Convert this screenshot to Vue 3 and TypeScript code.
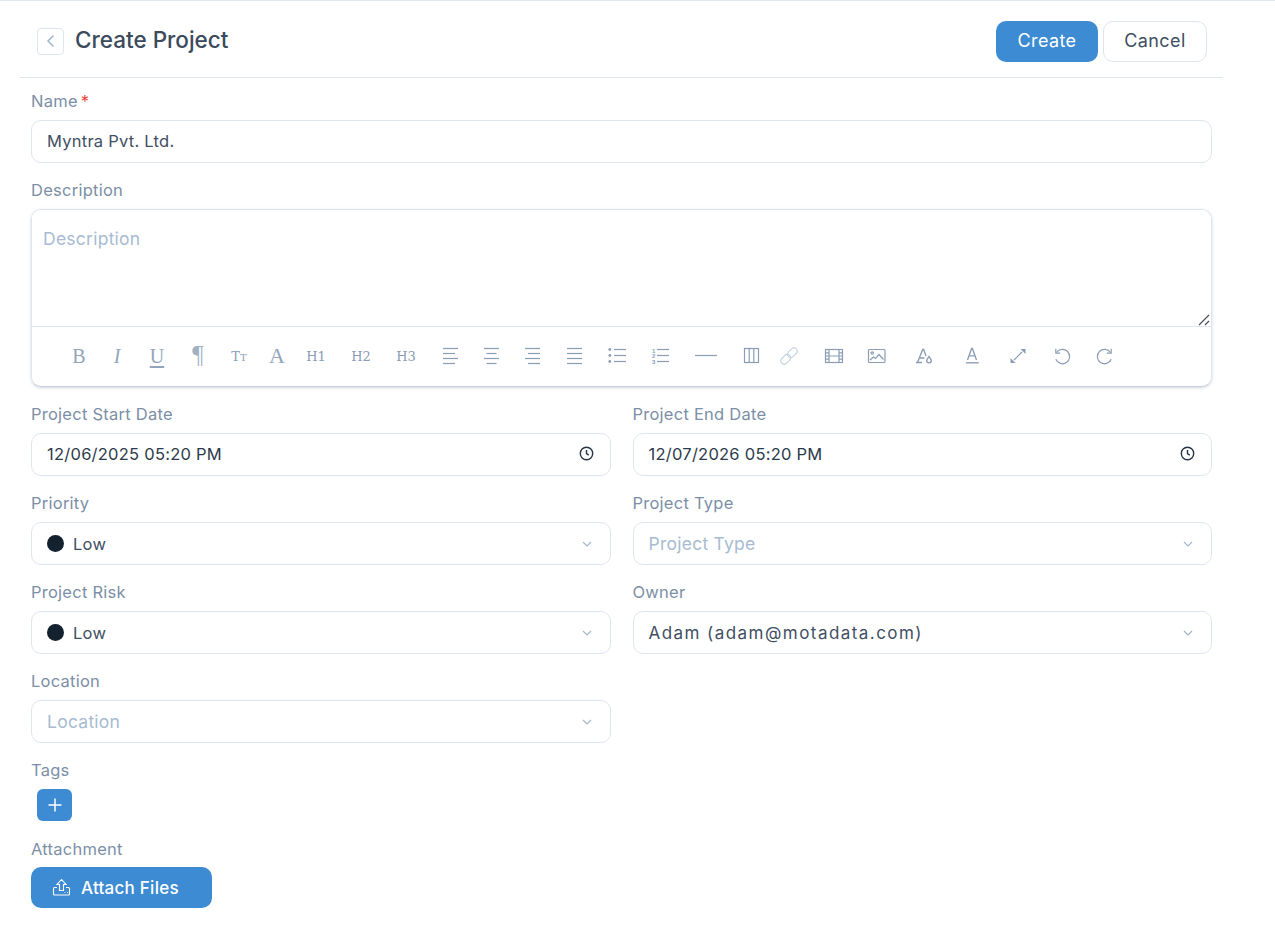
<script setup lang="ts">
interface Tool {
  c: number
  text?: string
  small?: string
  cls?: string
  svg?: string
  faded?: boolean
}

const lines = (rows: number[][]) =>
  rows.map(([a, y, b]) => `<path d="M${a} ${y}H${b}"/>`).join('')

const raw: Tool[] = [
  { c: 79, text: 'B', cls: 'big' },
  { c: 117, text: 'I', cls: 'big ital' },
  { c: 157, text: 'U', cls: 'big uline' },
  { c: 198, text: '¶', cls: 'para' },
  { c: 239, text: 'T', small: 'T', cls: 'tiny' },
  { c: 277, text: 'A', cls: 'large' },
  { c: 316, text: 'H1', cls: 'head' },
  { c: 361, text: 'H2', cls: 'head' },
  { c: 406, text: 'H3', cls: 'head' },
  { c: 450, svg: lines([[2, 1.5, 17], [2, 6.5, 14], [2, 11.5, 17], [2, 16.5, 14]]) },
  { c: 491, svg: lines([[2, 1.5, 17], [4.5, 6.5, 14.5], [2, 11.5, 17], [4.5, 16.5, 14.5]]) },
  { c: 533, svg: lines([[1, 1.5, 16], [4, 6.5, 16], [1, 11.5, 16], [4, 16.5, 16]]) },
  { c: 574, svg: lines([[2, 1.5, 17], [2, 6.5, 17], [2, 11.5, 17], [2, 16.5, 17]]) },
  {
    c: 617,
    svg:
      '<circle cx="1.8" cy="2.5" r="1.4" class="solid"/><circle cx="1.8" cy="8.5" r="1.4" class="solid"/><circle cx="1.8" cy="14.5" r="1.4" class="solid"/>' +
      lines([[6, 2.5, 18], [6, 8.5, 18], [6, 14.5, 18]]),
  },
  {
    c: 660,
    svg:
      '<text x="1" y="5.5">1</text><text x="1" y="11">2</text><text x="1" y="16.5">3</text>' +
      lines([[6, 2.5, 18], [6, 8.5, 18], [6, 14.5, 18]]),
  },
  { c: 706, svg: '<path d="M-2 8.5H20"/>' },
  {
    c: 751,
    svg: '<rect x="2.5" y="1.5" width="14" height="14" stroke-width="1.7"/><path d="M7.2 1.5v14M11.8 1.5v14" stroke-width="1.5"/>',
  },
  {
    c: 789,
    faded: true,
    svg: '<rect x="0.2" y="9" width="11" height="6.6" rx="3.3" transform="rotate(-45 5.7 12.3)"/><rect x="6.8" y="2.4" width="11" height="6.6" rx="3.3" transform="rotate(-45 12.3 5.7)"/>',
  },
  {
    c: 834,
    svg: '<rect x="0.5" y="2.5" width="17" height="13" /><path d="M4 2.5v13M14 2.5v13M4 9h10M.5 5.8h3.5M.5 9h3.5M.5 12.2h3.5M14 5.8h3.5M14 9h3.5M14 12.2h3.5"/>',
  },
  {
    c: 877,
    svg: '<rect x="0.5" y="2.5" width="16.5" height="13" rx="1"/><circle cx="4.2" cy="6" r="1.2"/><path d="M2 13l3.5-3 2 1.5 3.5-4 4.5 5"/>',
  },
  {
    c: 923,
    cls: 'strong',
    svg: '<path d="M2 15.5h6M3.5 15.5 8.7 2.5h1L12 9M5.5 11h5"/><path d="M15 9.5c-1.5 1.9-2.3 2.9-2.3 4a2.3 2.3 0 0 0 4.6 0c0-1.1-.8-2.1-2.3-4z"/>',
  },
  {
    c: 972,
    cls: 'strong',
    svg: '<path d="M4.5 13 8.6 1.5h.8L13.5 13M6 8.8h6"/><path d="M3 15.8h12.8" stroke-width="1.8"/>',
  },
  {
    c: 1018,
    svg: '<path d="M5 13 13 5" stroke-width="1.4"/><path class="solid" d="M11.5 2H16.5V7zM6.5 16H1.5V11z"/>',
  },
  {
    c: 1062,
    svg: '<path d="M3.5 5.5a7.2 7.2 0 1 1-.7 6.8"/><path d="M2.8 1.8v4.4h4.4"/>',
  },
  {
    c: 1105,
    svg: '<path d="M14.5 5.5a7.2 7.2 0 1 0 .7 6.8"/><path d="M15.2 1.8v4.4h-4.4"/>',
  },
]

// Fixed-width buttons; the margin between them carries the toolbar's uneven rhythm.
const TOOL_WIDTH = 36
const tools = raw.map((t, i) => ({
  ...t,
  gap: i === 0 ? 0 : t.c - raw[i - 1].c - TOOL_WIDTH,
}))
</script>

<template>
  <div class="page">
    <header class="head-bar">
      <div class="title-wrap">
        <button class="back" type="button" aria-label="Back">
          <svg width="12" height="14" viewBox="0 0 12 14"><path d="M8.5 1.5 3 7l5.5 5.5" /></svg>
        </button>
        <h1>Create Project</h1>
      </div>
      <div class="actions">
        <button class="btn primary" type="button">Create</button>
        <button class="btn ghost" type="button">Cancel</button>
      </div>
    </header>

    <form class="form" @submit.prevent>
      <div class="field wide">
        <label>Name<span class="req">*</span></label>
        <input class="control raised" type="text" value="Myntra Pvt. Ltd." />
      </div>

      <div class="field wide">
        <label>Description</label>
        <div class="editor">
          <div class="text-wrap">
            <textarea placeholder="Description"></textarea>
            <svg class="grip" width="12" height="12" viewBox="0 0 12 12">
              <path d="M1 11 11 1M7 11l4-4" />
            </svg>
          </div>
          <div class="toolbar">
            <span
              v-for="t in tools"
              :key="t.c"
              class="tool"
              :class="[t.cls, { faded: t.faded }]"
              :style="{ width: TOOL_WIDTH + 'px', marginLeft: t.gap + 'px' }"
            >
              <template v-if="t.text">{{ t.text }}<small v-if="t.small">{{ t.small }}</small></template>
              <svg v-else width="18" height="18" viewBox="0 0 18 18" v-html="t.svg"></svg>
            </span>
          </div>
        </div>
      </div>

      <div class="field">
        <label>Project Start Date</label>
        <div class="control box raised">
          <span class="dark">12/06/2025 05:20 PM</span>
          <svg class="clock" width="15" height="15" viewBox="0 0 15 15"><circle cx="7.5" cy="7.5" r="6.2" /><path d="M7.5 4v3.7l2.3 1.4" /></svg>
        </div>
      </div>
      <div class="field">
        <label>Project End Date</label>
        <div class="control box raised">
          <span class="dark">12/07/2026 05:20 PM</span>
          <svg class="clock" width="15" height="15" viewBox="0 0 15 15"><circle cx="7.5" cy="7.5" r="6.2" /><path d="M7.5 4v3.7l2.3 1.4" /></svg>
        </div>
      </div>

      <div class="field">
        <label>Priority</label>
        <div class="control box">
          <span class="val"><i class="dot"></i>Low</span>
          <svg class="chev" width="10" height="6" viewBox="0 0 10 6"><path d="M1 1l4 4 4-4" /></svg>
        </div>
      </div>
      <div class="field">
        <label>Project Type</label>
        <div class="control box">
          <span class="ph">Project Type</span>
          <svg class="chev" width="10" height="6" viewBox="0 0 10 6"><path d="M1 1l4 4 4-4" /></svg>
        </div>
      </div>

      <div class="field">
        <label>Project Risk</label>
        <div class="control box">
          <span class="val"><i class="dot"></i>Low</span>
          <svg class="chev" width="10" height="6" viewBox="0 0 10 6"><path d="M1 1l4 4 4-4" /></svg>
        </div>
      </div>
      <div class="field">
        <label>Owner</label>
        <div class="control box">
          <span class="val owner">Adam (adam@motadata.com)</span>
          <svg class="chev" width="10" height="6" viewBox="0 0 10 6"><path d="M1 1l4 4 4-4" /></svg>
        </div>
      </div>

      <div class="field">
        <label>Location</label>
        <div class="control box">
          <span class="ph">Location</span>
          <svg class="chev" width="10" height="6" viewBox="0 0 10 6"><path d="M1 1l4 4 4-4" /></svg>
        </div>
      </div>

      <div class="field wide tags">
        <label>Tags</label>
        <button class="add" type="button" aria-label="Add tag">
          <svg width="16" height="16" viewBox="0 0 16 16"><path d="M8 1.5v13M1.5 8h13" /></svg>
        </button>
      </div>

      <div class="field wide">
        <label class="low-label">Attachment</label>
        <button class="attach" type="button">
          <svg width="19" height="19" viewBox="0 0 19 19">
            <path d="M9.5 1.5 5 6.5h2.5v6h4v-6H14z" />
            <path d="M5 9.5H2.5a1 1 0 0 0-1 1v5.5a1 1 0 0 0 1 1h14a1 1 0 0 0 1-1v-5.5a1 1 0 0 0-1-1H14" />
            <path d="M12.5 14.5h.8M15 14.5h.8" />
          </svg>
          Attach Files
        </button>
      </div>
    </form>
  </div>
</template>

<style scoped>
.page {
  width: 1275px;
  height: 951px;
  box-sizing: border-box;
  border-top: 1px solid #e2e8f0;
  background: #fff;
  font-family: Inter, "Liberation Sans", sans-serif;
  font-size: 16.5px;
  letter-spacing: 0.25px;
  color: #3f4f63;
  overflow: hidden;
}
.head-bar {
  width: 1203px;
  height: 77px;
  box-sizing: border-box;
  margin-left: 20px;
  padding: 20px 16px 15px 17px;
  border-bottom: 1px solid #dfe5ee;
  display: flex;
  justify-content: space-between;
  align-items: flex-start;
}
.title-wrap {
  display: flex;
  align-items: center;
  gap: 11px;
  height: 41px;
}
.back {
  width: 27px;
  height: 27px;
  margin-top: -1px;
  padding: 0;
  border: 1px solid #dfe5ee;
  border-radius: 4px;
  background: #fff;
  display: flex;
  align-items: center;
  justify-content: center;
}
.back path {
  fill: none;
  stroke: #9fb4cc;
  stroke-width: 1.5;
}
h1 {
  margin: 0 0 3px;
  font-size: 22.5px;
  line-height: 30px;
  font-weight: 500;
  letter-spacing: 0;
  color: #3b4a5c;
}
.actions {
  display: flex;
  gap: 5px;
}
.btn {
  height: 41px;
  padding: 0 0 2px;
  border-radius: 10px;
  font: inherit;
  font-size: 18px;
  letter-spacing: 0.4px;
}
.primary {
  width: 102px;
  border: 0;
  background: #3d8bd3;
  color: #fff;
}
.ghost {
  width: 104px;
  border: 1px solid #dfe5ee;
  background: #fff;
  color: #3f4f63;
}
.form {
  margin-left: 31px;
  width: 1181px;
  padding-top: 12px;
  display: grid;
  grid-template-columns: 1fr 1fr;
  column-gap: 22px;
  row-gap: 16px;
}
.field {
  min-width: 0;
}
.wide {
  grid-column: 1 / -1;
}
label {
  display: block;
  height: 22px;
  margin-bottom: 8px;
  line-height: 22px;
  color: #7c8fa6;
}
.low-label {
  position: relative;
  top: 1px;
}
.req {
  margin-left: 3px;
  color: #e5483d;
  line-height: 0;
}
.control {
  display: block;
  width: 100%;
  height: 43px;
  box-sizing: border-box;
  padding: 0 15px;
  border: 1px solid #dfe5ee;
  border-radius: 10px;
  background: #fff;
  font: inherit;
  letter-spacing: inherit;
  color: #3f4f63;
  outline: none;
}
.raised {
  padding-bottom: 2px;
}
.box {
  display: flex;
  align-items: center;
  justify-content: space-between;
}
.dark {
  color: #2c3b4c;
}
.val {
  display: flex;
  align-items: center;
  gap: 9px;
}
.owner {
  font-size: 17px;
  letter-spacing: 1.45px;
}
.ph {
  font-size: 17.5px;
  color: #a7bbd1;
}
.dot {
  width: 17px;
  height: 17px;
  border-radius: 50%;
  background: #14212f;
}
.clock {
  margin-right: 1px;
}
.clock circle,
.clock path {
  fill: none;
  stroke: #263545;
  stroke-width: 1.4;
}
.chev {
  margin-right: 3px;
}
.chev path {
  fill: none;
  stroke: #a4b6ca;
  stroke-width: 1.2;
}
.editor {
  height: 178px;
  box-sizing: border-box;
  border: 1px solid #dfe5ee;
  border-bottom-color: #c5cfdb;
  border-radius: 10px;
  box-shadow: 0 1px 3px rgba(120, 135, 155, 0.35);
  overflow: hidden;
}
.text-wrap {
  position: relative;
}
textarea {
  display: block;
  width: 100%;
  height: 117px;
  box-sizing: border-box;
  padding: 18px 11px;
  border: 0;
  border-bottom: 1px solid #dfe5ee;
  outline: none;
  resize: none;
  font: inherit;
  font-size: 17.5px;
  letter-spacing: inherit;
  line-height: 22px;
  color: #3f4f63;
}
textarea::placeholder {
  color: #a7bbd1;
  opacity: 1;
}
.grip {
  position: absolute;
  right: 1px;
  bottom: 1px;
}
.grip path {
  fill: none;
  stroke: #4a4f55;
  stroke-width: 1.2;
}
.toolbar {
  height: 58px;
  padding-left: 29px;
  padding-bottom: 1px;
  display: flex;
  align-items: center;
}
.tool {
  flex: none;
  height: 24px;
  display: flex;
  align-items: center;
  justify-content: center;
  font-family: "DejaVu Serif", "Liberation Serif", serif;
  letter-spacing: 0;
  color: #8a9db5;
}
.tool :deep(path),
.tool :deep(rect),
.tool :deep(circle) {
  fill: none;
  stroke: #8a9db5;
  stroke-width: 1.2;
}
.tool :deep(.solid) {
  fill: #8a9db5;
  stroke: none;
}
.tool :deep(text) {
  font-family: "Liberation Sans", sans-serif;
  font-size: 6px;
  font-weight: 700;
  fill: #8a9db5;
}
.strong :deep(path) {
  stroke-width: 1.35;
}
.tool svg {
  overflow: visible;
}
.faded :deep(rect) {
  stroke: #c8d4e1;
}
.big {
  font-family: "Liberation Serif", serif;
  font-size: 20px;
  color: #93a5bb;
}
.para {
  font-family: "Liberation Serif", serif;
  font-size: 25px;
  padding-bottom: 3px;
  box-sizing: border-box;
  color: #a0b0c3;
}
.ital {
  font-style: italic;
}
.uline {
  text-decoration: underline;
  text-underline-offset: 3px;
}
.tiny {
  font-size: 13px;
}
.tiny small {
  margin-top: 2px;
  font-size: 10px;
}
.large {
  font-family: "Liberation Serif", serif;
  font-size: 22px;
  color: #93a5bb;
}
.head {
  font-size: 13px;
}
.add {
  display: flex;
  align-items: center;
  justify-content: center;
  width: 35px;
  height: 32px;
  margin-left: 6px;
  padding: 0;
  border: 0;
  border-radius: 6px;
  background: #3d8bd3;
}
.add path {
  fill: none;
  stroke: #fff;
  stroke-width: 1.5;
}
.attach {
  display: flex;
  align-items: center;
  gap: 10px;
  width: 181px;
  height: 41px;
  padding: 0 0 0 21px;
  border: 0;
  border-radius: 10px;
  background: #3d8bd3;
  color: #fff;
  font: inherit;
  font-size: 17px;
  letter-spacing: 0.25px;
  font-weight: 500;
}
.attach svg {
  flex: none;
}
.attach path {
  fill: none;
  stroke: #fff;
  stroke-width: 1.1;
}
</style>
